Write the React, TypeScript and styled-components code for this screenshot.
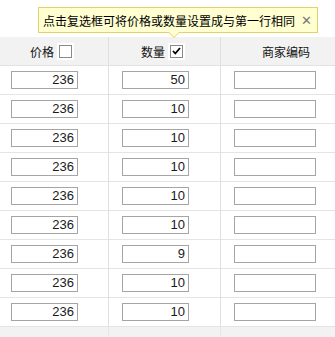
import React from "react";
import styled, { createGlobalStyle } from "styled-components";

const GlobalStyle = createGlobalStyle`
  html, body {
    margin: 0;
    padding: 0;
    background: #fff;
  }
  body {
    font-family: "Liberation Sans", "Noto Sans CJK SC", sans-serif;
    font-size: 12px;
    color: #000;
  }
`;

const Page = styled.div`
  width: 335px;
  height: 337px;
  overflow: hidden;
  background: #f2f2f2;
`;

const TopSpace = styled.div`
  height: 37px;
  background: #fff;
  position: relative;
`;

const Tip = styled.div`
  position: absolute;
  left: 38px;
  top: 7px;
  width: 280px;
  height: 26px;
  box-sizing: border-box;
  border: 1px solid #e3d26c;
  background: #ffffd2;
  display: flex;
  align-items: center;
  justify-content: space-between;
  padding: 0 5px 0 4px;
  font-family: "Noto Sans CJK SC", sans-serif;
  font-size: 12px;
  white-space: nowrap;
  z-index: 2;

  &::before,
  &::after {
    content: "";
    position: absolute;
    width: 0;
    height: 0;
    border-style: solid;
    border-color: transparent;
  }
  &::before {
    left: 129px;
    bottom: -6px;
    border-width: 6px 6px 0 6px;
    border-top-color: #e3d26c;
  }
  &::after {
    left: 130px;
    bottom: -5px;
    border-width: 5px 5px 0 5px;
    border-top-color: #ffffd2;
  }
`;

const Close = styled.span`
  color: #777;
  font-family: "Liberation Sans", sans-serif;
  font-size: 13px;
  line-height: 1;
`;

const Table = styled.div`
  display: grid;
  grid-template-columns: 109px 112px 114px;
`;

const HeadCell = styled.div<{ $pad: number; $last?: boolean }>`
  height: 29px;
  box-sizing: border-box;
  background: #f2f2f2;
  border-right: ${(p) => (p.$last ? "none" : "1px solid #e0e0e0")};
  border-bottom: 1px solid #e2e2e2;
  display: flex;
  align-items: center;
  padding-left: ${(p) => p.$pad}px;
  gap: 5px;
  font-family: "Noto Sans CJK SC", sans-serif;
  font-size: 12px;
  color: #111;
`;

const Check = styled.span`
  width: 11px;
  height: 11px;
  border: 1px solid #8a8a8a;
  background: #fff;
  outline: 2px solid #fff;
  display: inline-flex;
  align-items: center;
  justify-content: center;
`;

const Cell = styled.div<{ $pad: number; $last?: boolean }>`
  height: 29px;
  box-sizing: border-box;
  background: #fff;
  border-right: ${(p) => (p.$last ? "none" : "1px solid #e0e0e0")};
  border-bottom: 1px solid #e4e4e4;
  padding: 5px 0 0 ${(p) => p.$pad}px;
`;

const Field = styled.div<{ $w: number }>`
  width: ${(p) => p.$w}px;
  height: 18px;
  box-sizing: border-box;
  border: 1px solid #a5a5a5;
  background: #fff;
  text-align: right;
  padding-right: 3px;
  font-size: 13px;
  line-height: 16px;
  color: #1a1a1a;
`;

const Tail = styled.div`
  display: grid;
  grid-template-columns: 109px 112px 114px;
  height: 9px;
`;

const TailCell = styled.div<{ $last?: boolean }>`
  border-right: ${(p) => (p.$last ? "none" : "1px solid #e6e6e6")};
`;

const rows = [
  { price: "236", qty: "50" },
  { price: "236", qty: "10" },
  { price: "236", qty: "10" },
  { price: "236", qty: "10" },
  { price: "236", qty: "10" },
  { price: "236", qty: "10" },
  { price: "236", qty: "9" },
  { price: "236", qty: "10" },
  { price: "236", qty: "10" },
];

const App = () => {
  return (
    <>
      <GlobalStyle />
      <Page>
        <TopSpace>
          <Tip>
            <span>点击复选框可将价格或数量设置成与第一行相同</span>
            <Close>✕</Close>
          </Tip>
        </TopSpace>
        <Table>
          <HeadCell $pad={30}>
            价格
            <Check />
          </HeadCell>
          <HeadCell $pad={32}>
            数量
            <Check>
              <svg width="9" height="8" viewBox="0 0 9 8">
                <path d="M1 4 L3.3 6.5 L8 1" stroke="#000" strokeWidth="1.8" fill="none" />
              </svg>
            </Check>
          </HeadCell>
          <HeadCell $pad={41} $last>
            商家编码
          </HeadCell>
          {rows.map((r, i) => (
            <React.Fragment key={i}>
              <Cell $pad={11}>
                <Field $w={67}>{r.price}</Field>
              </Cell>
              <Cell $pad={13}>
                <Field $w={67}>{r.qty}</Field>
              </Cell>
              <Cell $pad={13} $last>
                <Field $w={82} />
              </Cell>
            </React.Fragment>
          ))}
        </Table>
        <Tail>
          <TailCell />
          <TailCell />
          <TailCell $last />
        </Tail>
      </Page>
    </>
  );
};

export default App;
